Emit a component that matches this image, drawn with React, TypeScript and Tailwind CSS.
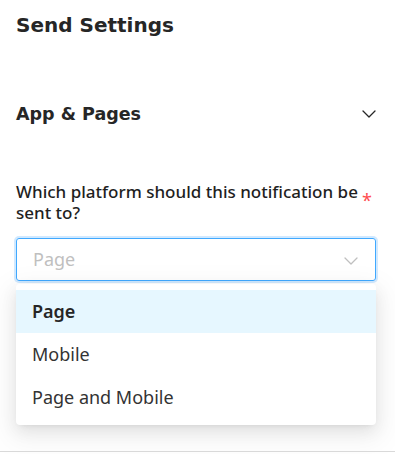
const options = ["Page", "Mobile", "Page and Mobile"];

function Chevron({ className }: { className?: string }) {
  return (
    <svg viewBox="0 0 14 8" width="14" height="8" fill="none" className={className}>
      <polyline points="1,1 7,7 13,1" stroke="currentColor" strokeWidth="1.3" strokeLinecap="round" strokeLinejoin="round" />
    </svg>
  );
}

export default function App() {
  return (
    <div className="relative w-[395px] h-[454px] bg-white overflow-hidden font-['Noto_Sans','Open_Sans',sans-serif]">
      <div className="px-4 pt-[10px]">
        {/* Title */}
        <h2 className="font-['DejaVu_Sans',sans-serif] text-[20px] leading-[30px] font-bold text-[#262626]">
          Send Settings
        </h2>

        {/* Section header */}
        <div className="mt-[60px] flex items-center justify-between">
          <h3 className="font-['DejaVu_Sans',sans-serif] text-[17.5px] leading-[28px] font-bold text-[#262626]">
            App &amp; Pages
          </h3>
          <Chevron className="text-[#262626] mr-[3px]" />
        </div>

        {/* Field */}
        <div className="mt-[53px] flex items-start">
          <label className="text-[17px] leading-[21px] font-medium text-[#1f1f1f] w-[346px]">
            Which platform should this notification be sent to?
          </label>
          <span className="mt-[12px] text-[#ff4d4f] text-[18px] leading-[14px]">*</span>
        </div>

        <div className="relative mt-[15px] w-[360px]">
          <div className="h-[43px] rounded-[3px] border border-[#40a9ff] shadow-[0_0_0_2px_rgba(24,144,255,0.2)] flex items-center justify-between pl-4 pr-[17px]">
            <span className="text-[18px] text-[#bfbfbf]">Page</span>
            <Chevron className="text-[#bfbfbf] mt-[2px]" />
          </div>

          {/* Dropdown */}
          <div className="absolute left-0 top-[46px] w-full bg-white rounded-[4px] py-[6px] shadow-[0_3px_6px_-4px_rgba(0,0,0,0.12),0_6px_16px_0_rgba(0,0,0,0.08),0_9px_28px_8px_rgba(0,0,0,0.05)]">
            {options.map((o, i) => (
              <div
                key={o}
                className={
                  i === 0
                    ? "h-[43px] flex items-center px-4 bg-[#e6f7ff] text-[18px] font-semibold text-[#262626]"
                    : "h-[43px] flex items-center px-4 text-[18px] text-[#333333]"
                }
              >
                {o}
              </div>
            ))}
          </div>
        </div>
      </div>

      {/* Bottom border */}
      <div className="absolute left-0 right-0 bottom-[2px] border-b border-[#d9d9d9]" />
    </div>
  );
}
